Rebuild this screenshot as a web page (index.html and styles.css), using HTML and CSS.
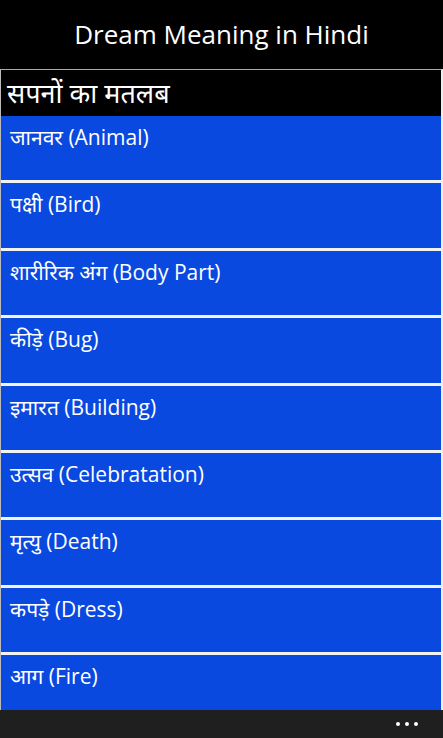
FILE: index.html
```html
<!DOCTYPE html>
<html lang="hi">
<head>
  <meta charset="UTF-8" />
  <title>Dream Meaning in Hindi</title>
  <link rel="stylesheet" href="styles.css">
</head>
<body>
  <div class="app">
    <h1 class="title">Dream Meaning in Hindi</h1>

    <div class="panel">
      <div class="panel-head">सपनों का मतलब</div>
      <ul class="list">
        <li>जानवर (Animal)</li>
        <li>पक्षी (Bird)</li>
        <li>शारीरिक अंग (Body Part)</li>
        <li>कीड़े (Bug)</li>
        <li>इमारत (Building)</li>
        <li>उत्सव (Celebratation)</li>
        <li>मृत्यु (Death)</li>
        <li>कपड़े (Dress)</li>
        <li>आग (Fire)</li>
      </ul>
    </div>

    <!-- app bar -->
    <div class="appbar">
      <span class="dot"></span><span class="dot"></span><span class="dot"></span>
    </div>
  </div>
</body>
</html>
```

FILE: styles.css
```css
body {
  margin: 0;
  background: #000;
  font-family: "Open Sans", "Noto Sans", "Noto Sans Devanagari", sans-serif;
  color: #fff;
}

.app {
  height: 738px;
  display: flex;
  flex-direction: column;
  overflow: hidden;
}

.title {
  margin: 0;
  height: 69px;
  display: flex;
  align-items: center;
  justify-content: center;
  font-size: 26px;
  font-weight: normal;
  padding-bottom: 2px;
  box-sizing: border-box;
}

.panel {
  flex: 1;
  overflow: hidden;
  border-top: 1px solid #aaa;
  border-left: 1px solid #bbb;
  border-right: 2px solid #eee;
  background: #f2f2f2;
}

.panel-head {
  background: #000;
  height: 46px;
  padding-left: 6px;
  font-size: 27px;
  line-height: 46px;
}

.list {
  list-style: none;
  margin: 0;
  padding: 0;
}

.list li {
  background: #0a49e0;
  height: 64.4px;
  margin-bottom: 3px;
  padding: 6px 0 0 9px;
  box-sizing: border-box;
  font-size: 21px;
  line-height: 30px;
}

.appbar {
  height: 28px;
  background: #1f1f1f;
  display: flex;
  justify-content: flex-end;
  align-items: center;
  gap: 5px;
  padding-right: 25px;
  flex-shrink: 0;
}

.dot {
  width: 4px;
  height: 4px;
  border-radius: 50%;
  background: #fff;
}
```
